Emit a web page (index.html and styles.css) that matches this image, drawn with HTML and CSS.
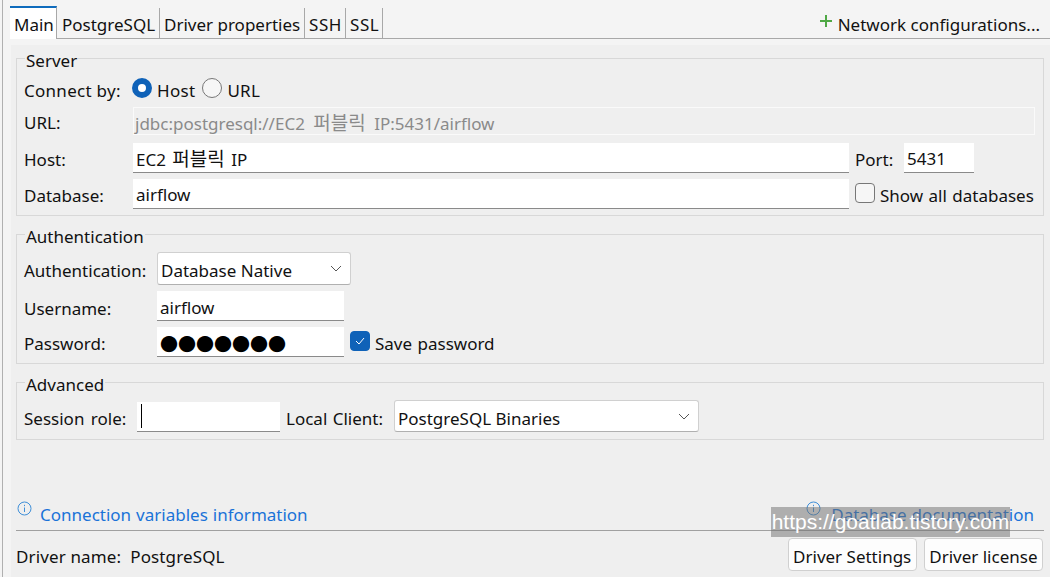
FILE: index.html
```html
<!DOCTYPE html>
<html lang="ko">
<head>
<meta charset="utf-8">
<title>Connection settings</title>
<link rel="stylesheet" href="styles.css">
</head>
<body>
<div class="window">
  <div class="tabbar">
    <div class="tab active t-main">Main</div>
    <div class="tab t-pg">PostgreSQL</div>
    <div class="tab t-driver">Driver properties</div>
    <div class="tab t-ssh">SSH</div>
    <div class="tab t-ssl">SSL</div>
    <div class="netconf">
      <svg class="plus" width="14" height="14" viewBox="0 0 14 14"><path d="M7 1v12M1 7h12" stroke="#4fa845" stroke-width="2" fill="none"/></svg>
      <span class="netconf-text">Network configurations...</span>
    </div>
  </div>
  <div class="panel">
    <fieldset class="group server">
      <legend>Server</legend>
      <div class="row connect">
        <span class="label connect-label">Connect by:</span>
        <span class="radio on"></span><span class="radio-text">Host</span>
        <span class="radio"></span><span class="radio-text">URL</span>
      </div>
      <div class="row url-row">
        <span class="label wide">URL:</span>
        <div class="field disabled url-field">jdbc:postgresql://EC2 <span class="ko">퍼블릭</span> IP:5431/airflow</div>
      </div>
      <div class="row host-row">
        <span class="label wide">Host:</span>
        <div class="field grow host-field">EC2 <span class="ko">퍼블릭</span> IP</div>
        <span class="port-label">Port:</span>
        <div class="field port">5431</div>
      </div>
      <div class="row db-row">
        <span class="label wide">Database:</span>
        <div class="field grow">airflow</div>
        <span class="check"></span>
        <span class="check-text">Show all databases</span>
      </div>
    </fieldset>
    <fieldset class="group auth">
      <legend>Authentication</legend>
      <div class="row auth-first">
        <span class="label auth-label">Authentication:</span>
        <div class="select auth-select">Database Native
          <svg class="chev" width="12" height="7" viewBox="0 0 12 7"><path d="M1 1l5 5 5-5" stroke="#555" fill="none"/></svg>
        </div>
      </div>
      <div class="row">
        <span class="label auth-label">Username:</span>
        <div class="field cred user">airflow</div>
      </div>
      <div class="row">
        <span class="label auth-label pw-label">Password:</span>
        <div class="field cred dots">●●●●●●●</div>
        <span class="check on">
          <svg width="12" height="10" viewBox="0 0 12 10"><path d="M2 5l3 3 5-6" stroke="#fff" stroke-width="1" fill="none"/></svg>
        </span>
        <span class="check-text">Save password</span>
      </div>
    </fieldset>
    <fieldset class="group advanced">
      <legend>Advanced</legend>
      <div class="row adv-row">
        <span class="label role-label">Session role:</span>
        <div class="field role"><i class="caret"></i></div>
        <span class="client-label">Local Client:</span>
        <div class="select client-select">PostgreSQL Binaries
          <svg class="chev" width="12" height="7" viewBox="0 0 12 7"><path d="M1 1l5 5 5-5" stroke="#555" fill="none"/></svg>
        </div>
      </div>
    </fieldset>
    <div class="links">
      <div class="link">
        <svg class="info" width="15" height="15" viewBox="0 0 15 15"><circle cx="7.5" cy="7.5" r="6.5" stroke="#3f8fd8" fill="none"/><path d="M7.5 6.5v4.5M7.5 3.8v1.4" stroke="#3f8fd8" fill="none"/></svg>
        <span>Connection variables information</span>
      </div>
      <div class="link">
        <svg class="info" width="15" height="15" viewBox="0 0 15 15"><circle cx="7.5" cy="7.5" r="6.5" stroke="#3f8fd8" fill="none"/><path d="M7.5 6.5v4.5M7.5 3.8v1.4" stroke="#3f8fd8" fill="none"/></svg>
        <span>Database documentation</span>
      </div>
    </div>
    <div class="footer">
      <span class="driver">Driver name:&nbsp; PostgreSQL</span>
      <button class="btn">Driver Settings</button>
      <button class="btn">Driver license</button>
    </div>
  </div>
  <div class="watermark">https://goatlab.tistory.com</div>
</div>
</body>
</html>
```
FILE: styles.css
```css
* { box-sizing: border-box; }
html, body { margin: 0; height: 100%; overflow: hidden; }
body {
  background: #f4f4f4;
  color: #111;
  font-family: "Noto Sans", "Noto Sans CJK KR", sans-serif;
  font-size: 17px;
}
.window {
  position: relative;
  width: 1050px;
  height: 577px;
  padding: 1px 0 0 10px;
  background: linear-gradient(#b0b0b0, #b0b0b0) 2px 0 / 1px 100% no-repeat;
}
.tabbar {
  display: flex;
  align-items: flex-end;
  height: 38px;
  padding-right: 10px;
  border-bottom: 1px solid #a8a8a8;
}
.tab {
  flex: none;
  height: 30px;
  padding-left: 4px;
  line-height: 34px;
  border-right: 1px solid #a8a8a8;
  white-space: nowrap;
}
.tab.active {
  background: #fff;
  border-top: 2px solid #0f6cbd;
  height: 33px;
  line-height: 33px;
  margin-bottom: -1px;
}
.t-main { width: 47px; }
.t-pg { width: 103px; padding-left: 5px; }
.t-driver { width: 145px; }
.t-ssh { width: 41px; letter-spacing: .6px; }
.t-ssl { width: 37px; letter-spacing: .6px; }
.netconf {
  margin-left: auto;
  display: flex;
  align-items: center;
  gap: 5px;
  height: 30px;
  line-height: 30px;
}
.netconf-text { margin-top: 4px; }
.plus { margin-top: -4px; }
.panel {
  margin-left: 1px;
  padding: 0 6px 0 5px;
  height: 537px;
  background: #efefef;
}
.group {
  margin: 5px 0 0;
  padding: 0 7px 6px;
  border: 1px solid #d8d8d8;
  min-width: 0;
}
.group legend {
  padding: 6px 1px 0;
  margin-left: 1px;
  line-height: 20px;
}
.row { display: flex; align-items: center; }
.server { margin-top: 6px; }
.advanced { padding-bottom: 7px; }
.label { flex: none; white-space: nowrap; word-spacing: 1px; }
.wide { width: 109px; padding-top: 2px; }
.connect-label { width: 108px; word-spacing: 0; letter-spacing: .28px; }
.auth-label { width: 133px; padding-top: 4px; }
.auth-label.pw-label { padding-top: 2px; }
.role-label { width: 113px; padding-top: 4px; word-spacing: 2px; }
.field {
  height: 30px;
  padding: 0 3px;
  line-height: 32px;
  background: #fff;
  border-bottom: 1px solid #8a8a8a;
  white-space: nowrap;
}
.ko { font-size: 19px; }
.grow { flex: none; width: 716px; }
.connect { height: 28px; margin-top: 5px; }
.url-row { margin-top: 3px; }
.host-row { margin-top: 8px; }
.db-row { margin-top: 6px; }
.url-field { width: 902px; margin-right: -1px; word-spacing: 4px; padding-left: 1px; }
.host-field { word-spacing: 2px; }
.disabled {
  height: 28px;
  line-height: 30px;
  background: #efefef;
  border: 1px solid #fafafa;
  color: #8a8a8a;
}
.radio {
  flex: none;
  width: 20px;
  height: 20px;
  margin: -4px 5px 0 0;
  border: 1px solid #777;
  border-radius: 50%;
  background: #f6f6f6;
}
.radio.on { border: 6px solid #0f62b8; background: #fff; }
.radio-text { margin-right: 7px; letter-spacing: .3px; }
.port-label { margin-left: 6px; width: 49px; padding-top: 2px; }
.port { width: 70px; }
.check {
  flex: none;
  display: flex;
  align-items: center;
  justify-content: center;
  width: 20px;
  height: 20px;
  margin: -2px 5px 0 6px;
  border: 1px solid #777;
  border-radius: 4px;
  background: #f6f6f6;
}
.check.on {
  background: #0f62b8;
  border-color: #0f62b8;
}
.check-text { white-space: nowrap; word-spacing: 1px; padding-top: 2px; }
.select {
  position: relative;
  height: 33px;
  padding: 0 3px;
  line-height: 35px;
  background: #fff;
  border: 1px solid #d0d0d0;
  border-bottom-color: #b0b0b0;
  border-radius: 3px;
}
.chev { position: absolute; right: 8px; top: 12px; }
.auth-first { margin-top: 5px; }
.auth-select { width: 194px; }
.client-select { width: 305px; height: 32px; }
.cred { width: 187px; }
.user { line-height: 34px; }
.auth .row + .row { margin-top: 6px; }
.dots { font-size: 18px; line-height: 34px; color: #000; overflow: hidden; }
.adv-row { margin-top: 5px; }
.role { position: relative; width: 143px; margin-top: 2px; }
.caret {
  position: absolute;
  left: 4px;
  top: 2px;
  width: 1px;
  height: 24px;
  background: #000;
}
.client-label {
  margin: 0 11px 0 6px;
  padding-top: 4px;
  white-space: nowrap;
  word-spacing: 1px;
}
.links {
  display: flex;
  justify-content: space-between;
  align-items: flex-end;
  height: 91px;
  padding: 0 10px 0 1px;
  border-bottom: 1px solid #a0a0a0;
}
.link {
  display: flex;
  gap: 8px;
  height: 30px;
  line-height: 30px;
  word-spacing: .6px;
  color: #1a73d8;
}
.link + .link { gap: 10px; }
.link .info { margin-top: 1px; flex: none; }
.footer {
  display: flex;
  align-items: center;
  gap: 7px;
  padding: 7px 1px 0 0;
}
.driver { margin-right: auto; padding-top: 4px; letter-spacing: .13px; }
.btn {
  height: 33px;
  padding: 3px 4.5px 0;
  font: inherit;
  color: inherit;
  background: #fdfdfd;
  border: 1px solid #d0d0d0;
  border-radius: 4px;
}
.watermark {
  position: absolute;
  left: 771px;
  top: 507px;
  width: 239px;
  height: 30px;
  background: rgba(110, 110, 110, 0.5);
  color: #fff;
  font-family: "Liberation Sans", sans-serif;
  font-size: 21px;
  line-height: 30px;
  text-align: center;
  white-space: nowrap;
}
```
